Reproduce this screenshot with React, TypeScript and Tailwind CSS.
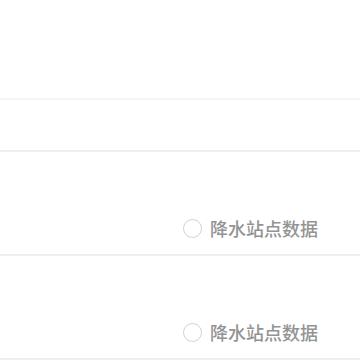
export default function App() {
  const rows = [0, 1];
  return (
    <div className="w-[360px] h-[360px] bg-white overflow-hidden" style={{ fontFamily: '"Noto Sans CJK SC", "Noto Sans", sans-serif' }}>
      <div className="h-[98px] bg-white" />
      <div className="h-[2px] bg-[#f4f5f9]" />
      <div className="h-[50px] bg-white" />
      <div className="h-[2px] bg-[#efefef]" />
      {rows.map((r) => (
        <div key={r}>
          <div className="h-[50px] bg-white" />
          <div className="h-[52px] flex items-center justify-end pr-[42px]">
            <label className="flex items-center gap-[8px]">
              <span className="w-[19px] h-[19px] rounded-full border-[1.5px] border-[#d2d2d2] bg-white" />
              <span className="text-[18px] leading-none font-medium text-[#939393]">降水站点数据</span>
            </label>
          </div>
          <div className="h-[2px] bg-[#efefef]" />
        </div>
      ))}
    </div>
  );
}
